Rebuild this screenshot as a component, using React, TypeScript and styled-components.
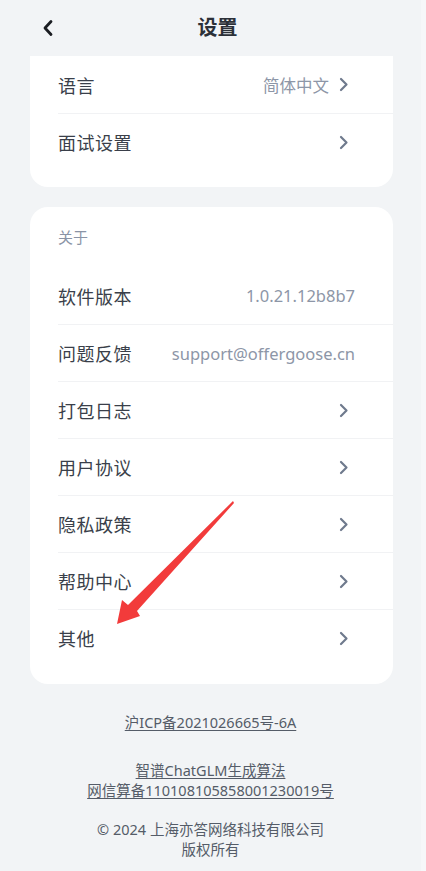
import React from 'react';
import styled, { createGlobalStyle } from 'styled-components';

const GlobalStyle = createGlobalStyle`
  html, body {
    margin: 0;
    padding: 0;
    background: #f2f4f6;
  }
  body {
    font-family: "Noto Sans", "Noto Sans CJK SC", sans-serif;
    -webkit-font-smoothing: antialiased;
  }
`;

const Page = styled.div`
  position: relative;
  display: flex;
  width: 426px;
  height: 871px;
  overflow: hidden;
`;

const Main = styled.div`
  display: flex;
  flex-direction: column;
  width: 421px;
  background: #f2f4f6;

  & > * {
    flex-shrink: 0;
  }
`;

/* thin lighter strip on the right edge */
const EdgeStrip = styled.div`
  width: 5px;
  background: #f6f7f9;
`;

const Header = styled.header`
  display: flex;
  align-items: center;
  height: 56px;
  padding: 0 0 0 38px;
`;

const BackButton = styled.button`
  display: flex;
  align-items: center;
  justify-content: center;
  width: 20px;
  height: 20px;
  padding: 0;
  border: none;
  background: none;
  color: #1b1d22;
`;

const Title = styled.h1`
  flex: 1;
  margin: 0;
  padding-right: 44px;
  font-size: 20px;
  font-weight: 700;
  color: #2c3038;
  text-align: center;
  line-height: 1;
`;

const Card = styled.section<{ $flatTop?: boolean }>`
  display: flex;
  flex-direction: column;
  margin: 0 28px 20px 30px;
  padding: ${(p) => (p.$flatTop ? '0 0 17px 28px' : '16px 0 18px 28px')};
  background: #fff;
  border-radius: ${(p) => (p.$flatTop ? '0 0 18px 18px' : '18px')};
`;

const SectionLabel = styled.div`
  font-size: 15px;
  color: #8a94a6;
  line-height: 28px;
  padding-bottom: 16px;
`;

const Row = styled.div<{ $divider?: boolean }>`
  display: flex;
  align-items: center;
  justify-content: space-between;
  height: 57px;
  box-sizing: border-box;
  padding-right: 38px;
  border-top: ${(p) => (p.$divider ? '1px solid #f1f2f4' : 'none')};
`;

const Label = styled.span`
  font-size: 18px;
  color: #3a3f4a;
  letter-spacing: 0.5px;
`;

const Value = styled.span`
  display: flex;
  align-items: center;
  gap: 9px;
  font-size: 16.5px;
  color: #8d96a7;
`;

const ChevronBox = styled.span`
  display: flex;
  margin-right: 6px;
`;

const Footer = styled.footer`
  display: flex;
  flex-direction: column;
  align-items: center;
  padding: 8px 0 0;
  font-size: 14.5px;
  line-height: 20px;
  color: #555c68;
  text-align: center;
`;

const FootLink = styled.a`
  color: #555c68;
  text-decoration: underline;
  text-underline-offset: 2px;
`;

const FootBlock = styled.div<{ $gap: number }>`
  display: flex;
  flex-direction: column;
  align-items: center;
  margin-top: ${(p) => p.$gap}px;
`;

const ArrowOverlay = styled.svg`
  position: absolute;
  left: 0;
  top: 0;
  pointer-events: none;
`;

const Chevron = () => (
  <ChevronBox>
    <svg width="11" height="15" viewBox="0 0 11 15">
      <path d="M3 2l5.5 5.5L3 13" fill="none" stroke="#6f7a8d" strokeWidth="2.2" strokeLinecap="round" strokeLinejoin="round" />
    </svg>
  </ChevronBox>
);

const BackIcon = () => (
  <svg width="14" height="18" viewBox="0 0 14 18">
    <path d="M10 2.5L4 9l6 6.5" fill="none" stroke="#1b1d22" strokeWidth="2.8" strokeLinecap="round" strokeLinejoin="round" />
  </svg>
);

type Item = { label: string; value?: string; chevron?: boolean };

const aboutItems: Item[] = [
  { label: '软件版本', value: '1.0.21.12b8b7' },
  { label: '问题反馈', value: 'support@offergoose.cn' },
  { label: '打包日志', chevron: true },
  { label: '用户协议', chevron: true },
  { label: '隐私政策', chevron: true },
  { label: '帮助中心', chevron: true },
  { label: '其他', chevron: true },
];

const SettingRow = ({ item, divider }: { item: Item; divider: boolean }) => (
  <Row $divider={divider}>
    <Label>{item.label}</Label>
    <Value>
      {item.value}
      {item.chevron && <Chevron />}
    </Value>
  </Row>
);

export default function App() {
  return (
    <Page>
      <GlobalStyle />
      <Main>
        <Header>
          <BackButton aria-label="back">
            <BackIcon />
          </BackButton>
          <Title>设置</Title>
        </Header>

        <Card $flatTop>
          <SettingRow item={{ label: '语言', value: '简体中文', chevron: true }} divider={false} />
          <SettingRow item={{ label: '面试设置', chevron: true }} divider />
        </Card>

        <Card>
          <SectionLabel>关于</SectionLabel>
          {aboutItems.map((item, i) => (
            <SettingRow key={item.label} item={item} divider={i > 0} />
          ))}
        </Card>

        <Footer>
          <FootLink>沪ICP备2021026665号-6A</FootLink>
          <FootBlock $gap={28}>
            <FootLink>智谱ChatGLM生成算法</FootLink>
            <FootLink>网信算备110108105858001230019号</FootLink>
          </FootBlock>
          <FootBlock $gap={19}>
            <span>© 2024 上海亦答网络科技有限公司</span>
            <span>版权所有</span>
          </FootBlock>
        </Footer>
      </Main>
      <EdgeStrip />

      <ArrowOverlay width="426" height="871" viewBox="0 0 426 871">
        <polygon
          points="233,501 234,503 137,611 140,616 117,624 122,600 128,605"
          fill="#f23b3b"
        />
      </ArrowOverlay>
    </Page>
  );
}
